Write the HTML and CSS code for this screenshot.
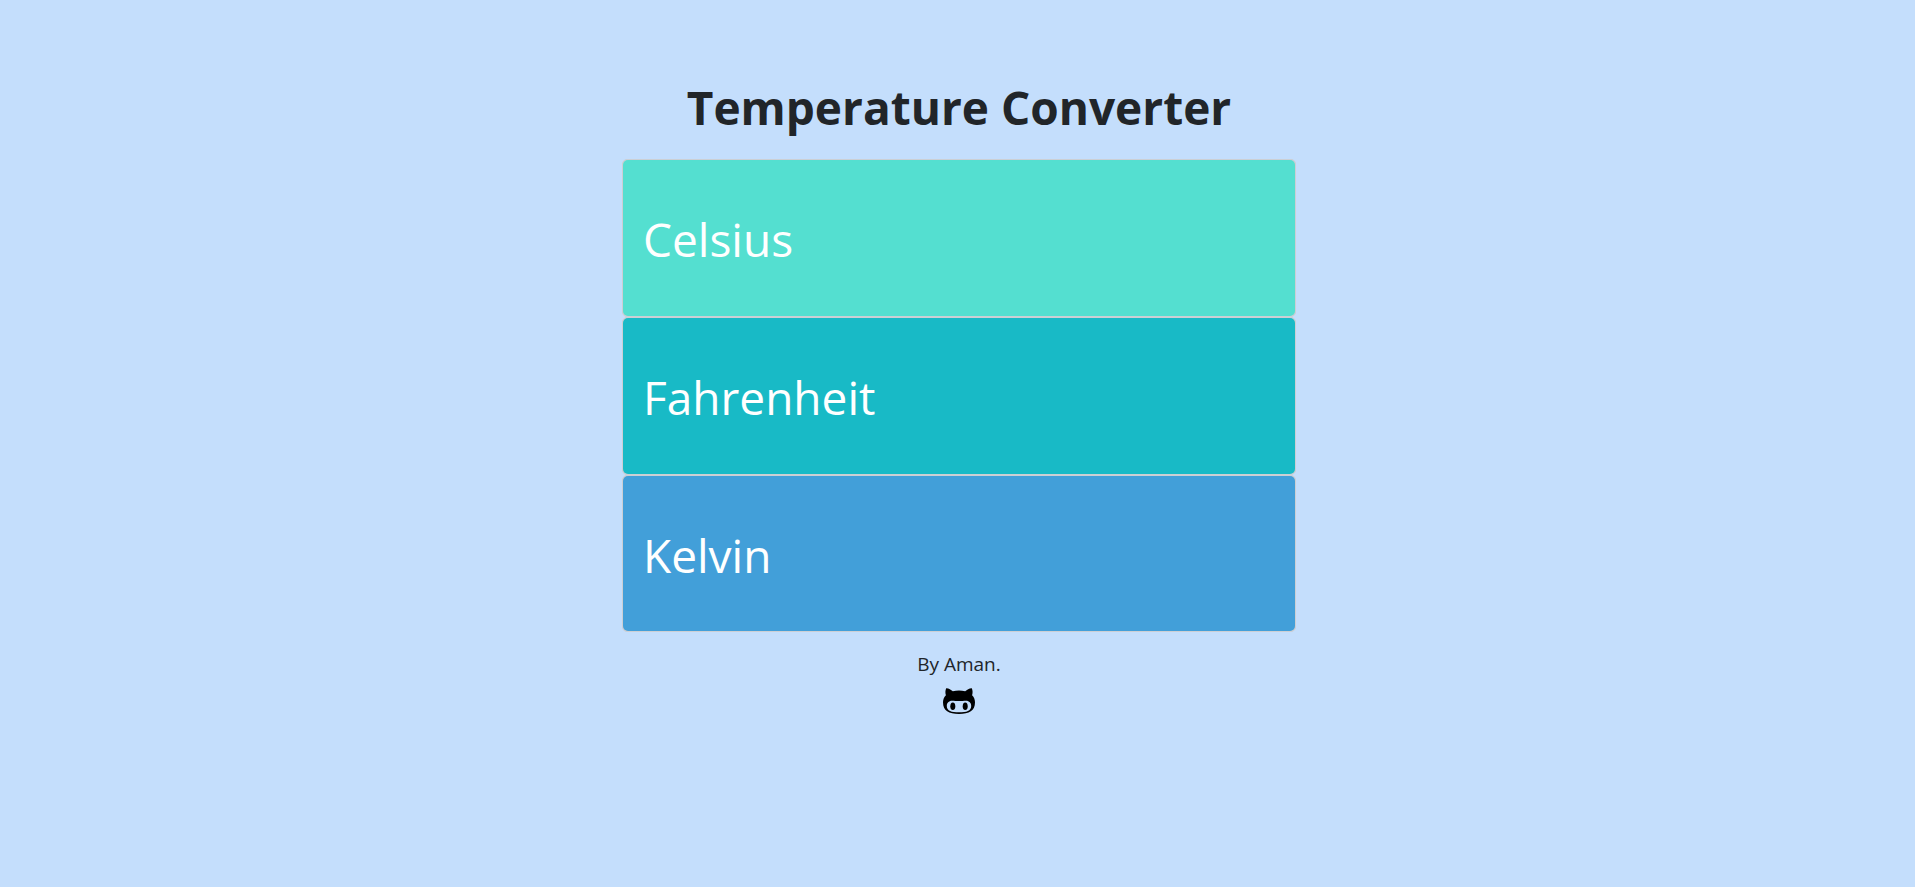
FILE: index.html
```html
<!DOCTYPE html>
<html lang="en">
<head>
<meta charset="utf-8">
<meta name="viewport" content="width=device-width, initial-scale=1">
<title>Temperature Converter</title>
<link rel="stylesheet" href="styles.css">
</head>
<body>
<main class="converter">
  <h1 class="title">Temperature Converter</h1>
  <form class="fields">
    <div class="card"><input class="field celsius" type="text" placeholder="Celsius" aria-label="Celsius"></div>
    <div class="card"><input class="field fahrenheit" type="text" placeholder="Fahrenheit" aria-label="Fahrenheit"></div>
    <div class="card"><input class="field kelvin" type="text" placeholder="Kelvin" aria-label="Kelvin"></div>
  </form>
  <footer class="footer">
    <p class="author">By Aman.</p>
    <a class="github" href="#" aria-label="GitHub">
      <svg class="icon" viewBox="0 0 32 26" aria-hidden="true">
        <path fill="#000" fill-rule="evenodd" d="M3.2 0.3C5.7 0.2 7.9 1.8 9.8 3.2C13.8 2.4 18.2 2.4 22.2 3.2C24.1 1.8 26.3 0.2 28.8 0.3C29.8 2.5 29.8 5 29.1 7.2C31.1 9.3 32 11.6 32 14.3C32 22.8 26.2 26 16 26S0 22.8 0 14.3C0 11.6 0.9 9.3 2.9 7.2C2.2 5 2.2 2.5 3.2 0.3ZM16 24.3C23.5 24.3 28.2 22.8 28.2 17.9C28.2 15.1 26.2 12.8 23 12.8C20.5 12.8 18.7 13.1 16 13.1S11.5 12.8 9 12.8C5.8 12.8 3.8 15.1 3.8 17.9C3.8 22.8 8.5 24.3 16 24.3Z"/>
        <ellipse cx="9.8" cy="18.2" rx="2.5" ry="3.8"/>
        <ellipse cx="22.2" cy="18.2" rx="2.5" ry="3.8"/>
      </svg>
    </a>
  </footer>
</main>
</body>
</html>
```
FILE: styles.css
```css
* {
  box-sizing: border-box;
}

body {
  margin: 0;
  padding: 76px 0 0 3px;
  background: #c4defc;
  color: #212529;
  font-family: "Segoe UI", "Open Sans", "Noto Sans", sans-serif;
  font-size: 19px;
  line-height: 27px;
}

.converter {
  max-width: 674px;
  margin: 0 auto;
}

.title {
  margin: 0 0 20px;
  text-align: center;
  font-size: 46px;
  line-height: 63px;
  font-weight: 700;
}

.card {
  height: 158px;
  border: 1px solid #cccfd4;
  border-radius: 5px;
  background: #cccfd4;
}

.card:last-child {
  height: 157px;
}

.field {
  display: block;
  width: 100%;
  height: 100%;
  padding: 2px 20px 0;
  border: 0;
  border-radius: 5px;
  color: #fff;
  font: inherit;
  font-size: 46px;
}

.field::placeholder {
  color: #fff;
  opacity: 1;
}

.celsius {
  background: #54dfd0;
}

.fahrenheit {
  background: #18bac6;
}

.kelvin {
  background: #429fd9;
}

.footer {
  padding-top: 19px;
  text-align: center;
}

.author {
  margin: 0 0 10px;
}

.github {
  display: inline-block;
}

.icon {
  display: block;
  width: 32px;
  height: 26px;
}
```
